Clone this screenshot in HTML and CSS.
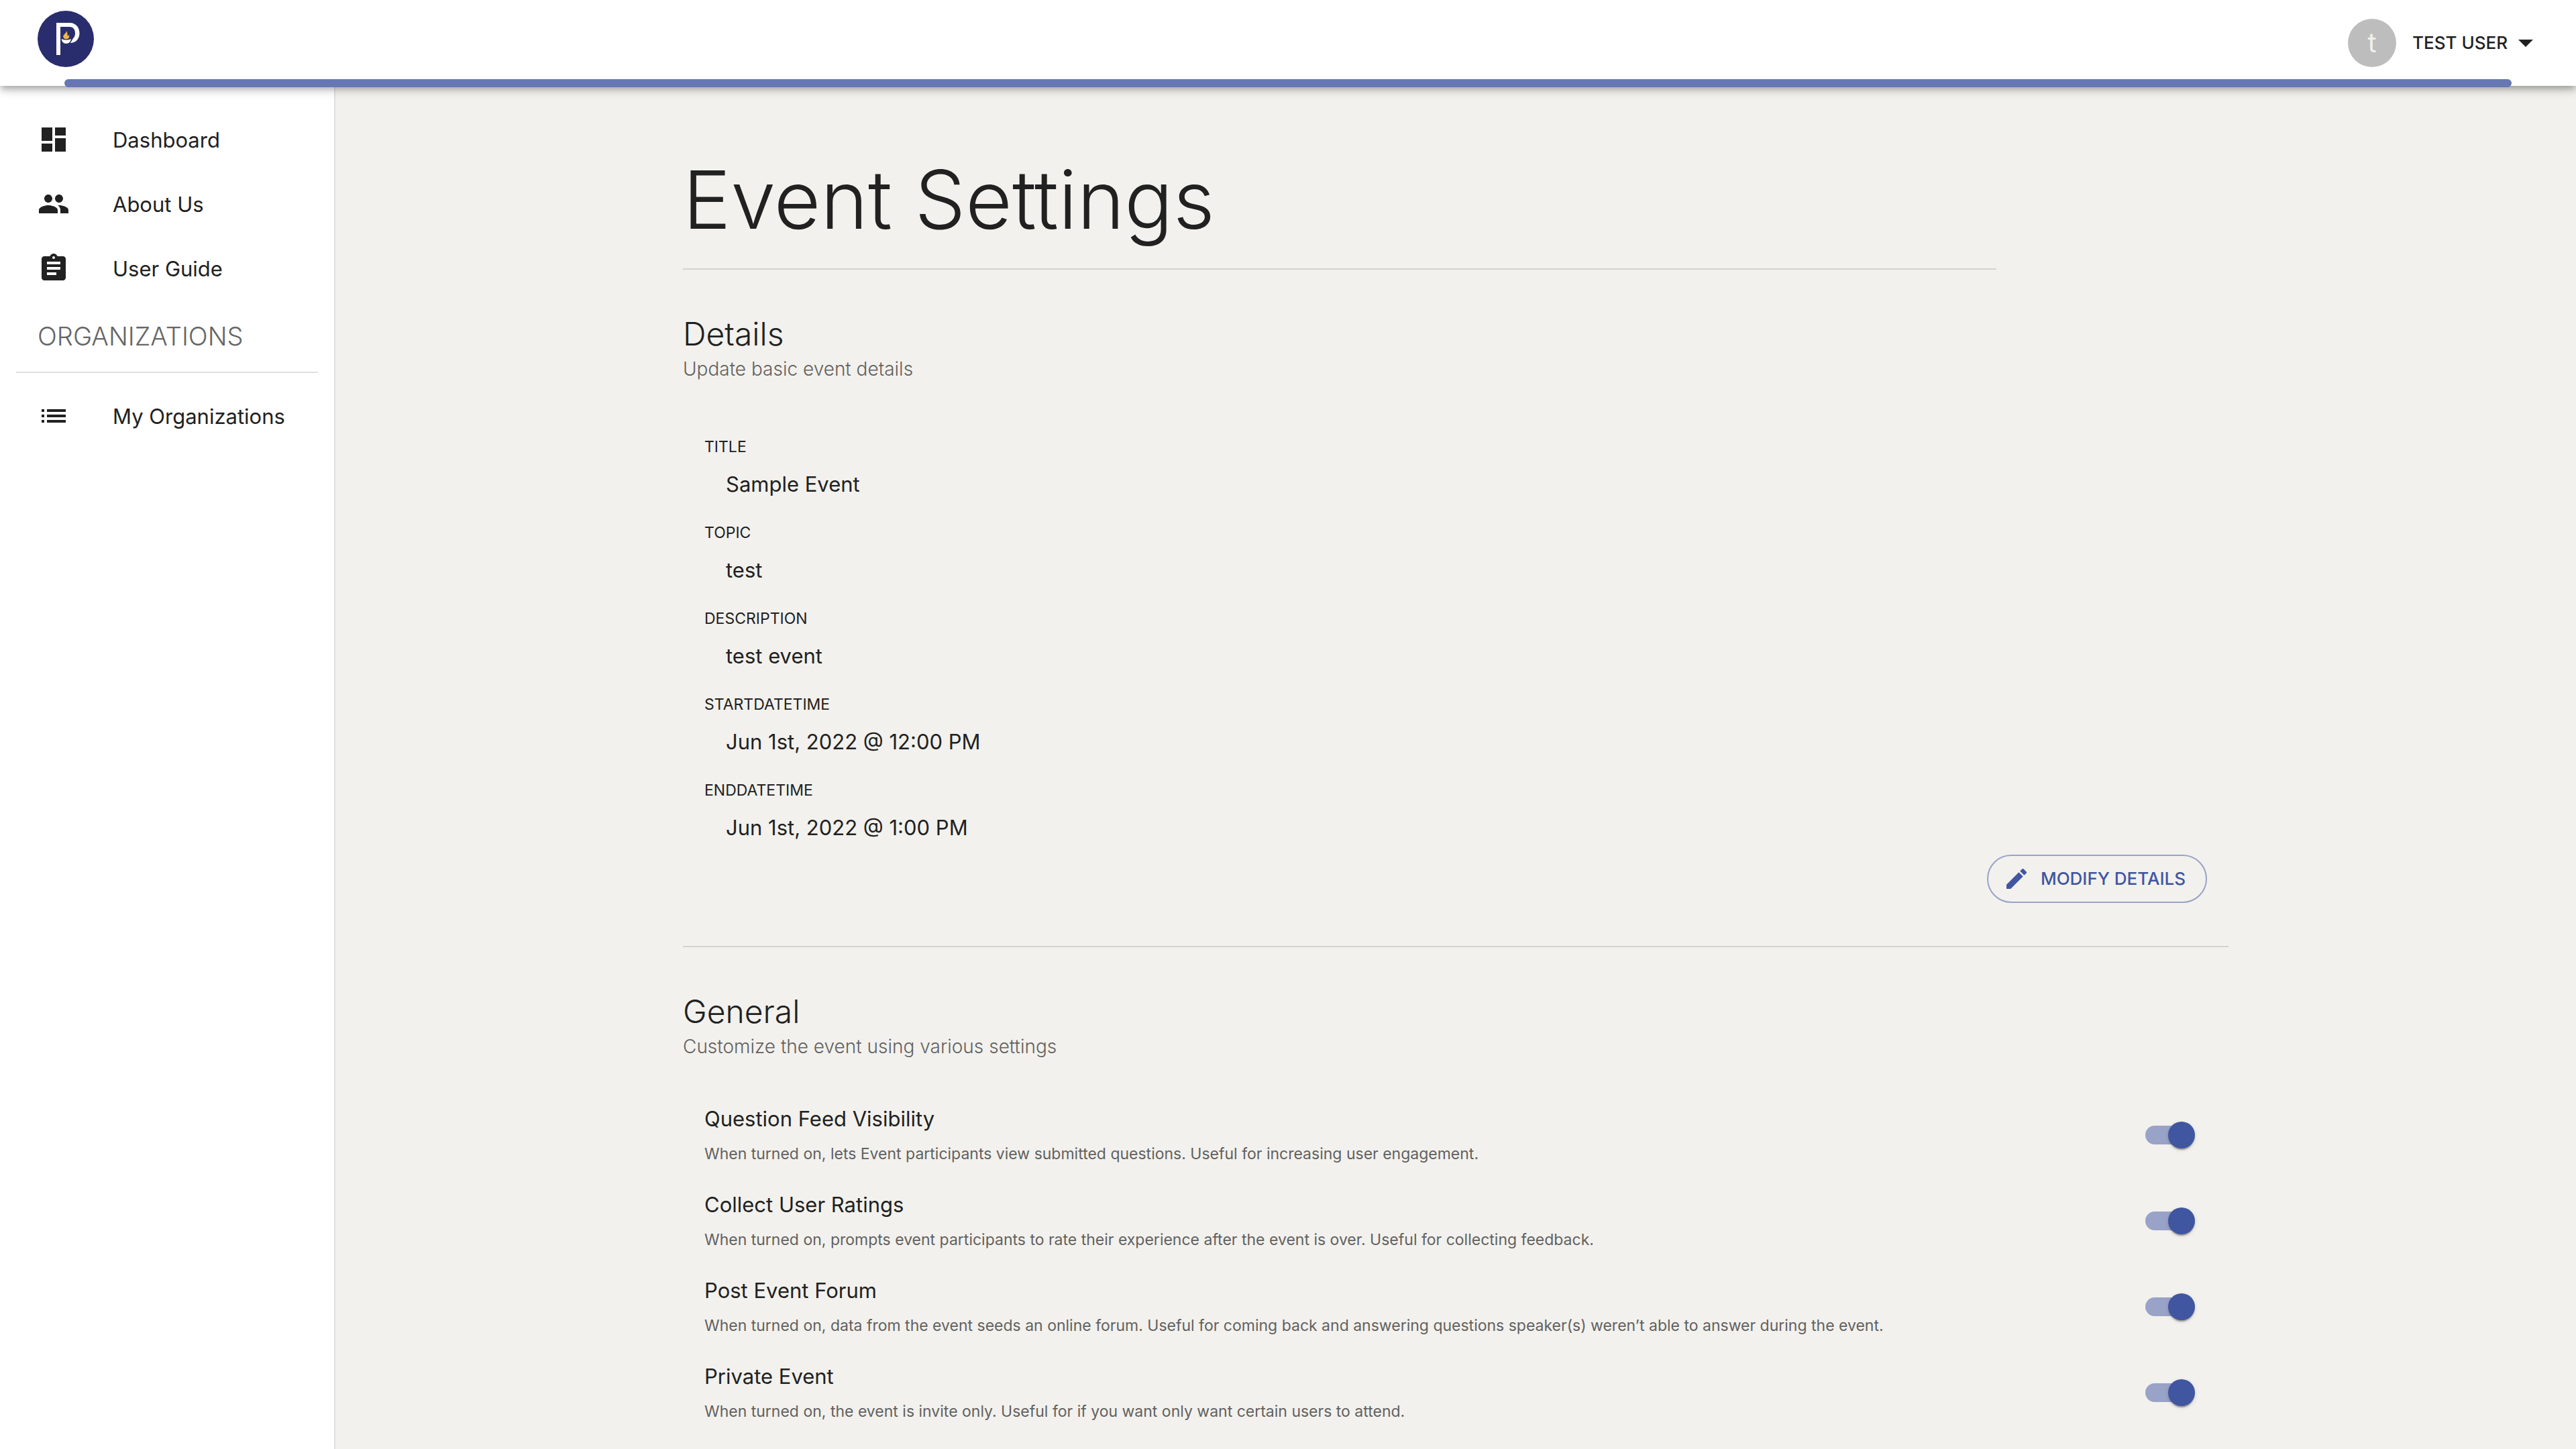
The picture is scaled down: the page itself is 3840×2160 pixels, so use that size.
FILE: index.html
```html
<!DOCTYPE html>
<html lang="en">
<head>
  <meta charset="utf-8">
  <meta name="viewport" content="width=device-width, initial-scale=1">
  <title>Event Settings</title>
  <link rel="stylesheet" href="styles.css">
</head>
<body>
  <header class="topbar">
    <a class="logo" href="#" aria-label="Home">
      <svg viewBox="0 0 84 84" width="84" height="84" aria-hidden="true">
        <circle cx="42" cy="42" r="42" fill="#292d6e"/>
        <path fill="#fff" d="M28 18h20c9 0 14.500 7 14.500 15.500C62.500 42 57 48 48.500 48c2.500-2 3-5.500 5.500-8 1.500-1.700 2-3.800 2-6.500 0-5.500-3-9.500-8-9.500H34v42h-6z"/>
        <path fill="#fff" d="M35.700 42c4.500 2 9.500 2 14 0-.2 4-3 7-7 7s-6.800-3-7-7z"/>
        <path fill="#ebb84a" d="M43 30c.5 3-4.800 5.200-4.800 8.500 0 2.200 2 3.800 4.500 3.800s4.600-1.600 4.600-4c0-1-.3-1.800-.9-2.500-.1 1-.6 1.600-1.400 1.700C44 35 45 32.500 43 30z"/>
      </svg>
    </a>
    <button class="user-menu" type="button">
      <span class="avatar">t</span>
      <span class="user-name">TEST USER</span>
      <svg class="caret" viewBox="0 0 22 11" width="22" height="11" aria-hidden="true"><path d="M0 0h22L11 11z"/></svg>
    </button>
    <div class="loading-bar"></div>
  </header>

  <div class="layout">
    <nav class="sidebar">
      <a class="nav-link" href="#">
        <svg class="nav-icon" viewBox="0 0 24 24" aria-hidden="true"><path d="M3 13h8V3H3v10zm0 8h8v-6H3v6zm10 0h8V11h-8v10zm0-18v6h8V3h-8z"/></svg>
        <span>Dashboard</span>
      </a>
      <a class="nav-link" href="#">
        <svg class="nav-icon" viewBox="0 0 24 24" aria-hidden="true"><path d="M16 11c1.660 0 2.990-1.340 2.990-3S17.660 5 16 5c-1.660 0-3 1.340-3 3s1.340 3 3 3zm-8 0c1.660 0 2.990-1.340 2.990-3S9.660 5 8 5C6.340 5 5 6.340 5 8s1.340 3 3 3zm0 2c-2.330 0-7 1.170-7 3.500V19h14v-2.500c0-2.330-4.670-3.500-7-3.500zm8 0c-.29 0-.62.02-.97.05 1.160.84 1.970 1.970 1.970 3.450V19h6v-2.500c0-2.330-4.670-3.500-7-3.500z"/></svg>
        <span>About Us</span>
      </a>
      <a class="nav-link" href="#">
        <svg class="nav-icon" viewBox="0 0 24 24" aria-hidden="true"><path d="M19 3h-4.180C14.400 1.840 13.300 1 12 1c-1.300 0-2.400.84-2.820 2H5c-1.100 0-2 .9-2 2v14c0 1.100.9 2 2 2h14c1.100 0 2-.9 2-2V5c0-1.100-.9-2-2-2zm-7 0c.55 0 1 .45 1 1s-.45 1-1 1-1-.45-1-1 .45-1 1-1zm2 14H7v-2h7v2zm3-4H7v-2h10v2zm0-4H7V7h10v2z"/></svg>
        <span>User Guide</span>
      </a>
      <h2 class="nav-heading">ORGANIZATIONS</h2>
      <a class="nav-link" href="#">
        <svg class="nav-icon" viewBox="0 0 24 24" aria-hidden="true"><path d="M3 13h2v-2H3v2zm0 4h2v-2H3v2zm0-8h2V7H3v2zm4 4h14v-2H7v2zm0 4h14v-2H7v2zM7 7v2h14V7H7z"/></svg>
        <span>My Organizations</span>
      </a>
    </nav>

    <main class="main">
      <div class="content">
        <h1 class="page-title">Event Settings</h1>

        <section class="section section-details">
          <h2 class="section-title">Details</h2>
          <p class="section-subtitle">Update basic event details</p>
          <dl class="details">
            <div><dt>TITLE</dt><dd>Sample Event</dd></div>
            <div><dt>TOPIC</dt><dd>test</dd></div>
            <div><dt>DESCRIPTION</dt><dd>test event</dd></div>
            <div><dt>STARTDATETIME</dt><dd>Jun 1st, 2022 @ 12:00 PM</dd></div>
            <div><dt>ENDDATETIME</dt><dd>Jun 1st, 2022 @ 1:00 PM</dd></div>
          </dl>
          <button class="modify" type="button">
            <svg viewBox="0 0 24 24" width="40" height="40" aria-hidden="true"><path d="M3 17.250V21h3.750L17.810 9.940l-3.750-3.750L3 17.250zM20.710 7.040c.39-.39.39-1.020 0-1.410l-2.340-2.340c-.39-.39-1.020-.39-1.410 0l-1.830 1.830 3.750 3.750 1.830-1.830z"/></svg>
            MODIFY DETAILS
          </button>
        </section>

        <section class="section">
          <h2 class="section-title">General</h2>
          <p class="section-subtitle">Customize the event using various settings</p>
          <div class="settings">
            <div class="setting">
              <div>
                <label class="setting-name" for="feed">Question Feed Visibility</label>
                <p class="setting-help" id="feed-help">When turned on, lets Event participants view submitted questions. Useful for increasing user engagement.</p>
              </div>
              <input class="switch" type="checkbox" role="switch" id="feed" aria-describedby="feed-help" checked>
            </div>
            <div class="setting">
              <div>
                <label class="setting-name" for="ratings">Collect User Ratings</label>
                <p class="setting-help" id="ratings-help">When turned on, prompts event participants to rate their experience after the event is over. Useful for collecting feedback.</p>
              </div>
              <input class="switch" type="checkbox" role="switch" id="ratings" aria-describedby="ratings-help" checked>
            </div>
            <div class="setting">
              <div>
                <label class="setting-name" for="forum">Post Event Forum</label>
                <p class="setting-help" id="forum-help">When turned on, data from the event seeds an online forum. Useful for coming back and answering questions speaker(s) weren’t able to answer during the event.</p>
              </div>
              <input class="switch" type="checkbox" role="switch" id="forum" aria-describedby="forum-help" checked>
            </div>
            <div class="setting">
              <div>
                <label class="setting-name" for="private">Private Event</label>
                <p class="setting-help" id="private-help">When turned on, the event is invite only. Useful for if you want only want certain users to attend.</p>
              </div>
              <input class="switch" type="checkbox" role="switch" id="private" aria-describedby="private-help" checked>
            </div>
          </div>
        </section>
      </div>
    </main>
  </div>
</body>
</html>
```
FILE: styles.css
```css
:root {
  --ink: #212121;
  --muted: #626160;
  --primary: #4056a1;
  --primary-light: #6677b3;
  --primary-half: rgba(64, 86, 161, 0.5);
  --page: #f2f1ed;
  --line: rgba(0, 0, 0, 0.12);
}

* {
  box-sizing: border-box;
}

body {
  margin: 0;
  min-height: 100vh;
  display: flex;
  flex-direction: column;
  background: var(--page);
  color: var(--ink);
  font-family: Inter, "Liberation Sans", sans-serif;
  font-size: 31px;
}

h1, h2, p, dl, dd {
  margin: 0;
  font-weight: 400;
}

svg {
  display: block;
  flex: none;
  fill: currentColor;
}

.topbar {
  position: relative;
  z-index: 1;
  height: 128px;
  padding: 0 64px 0 56px;
  display: flex;
  align-items: center;
  justify-content: space-between;
  background: #fff;
  box-shadow: 0 4px 8px -2px rgba(0, 0, 0, 0.2), 0 8px 10px rgba(0, 0, 0, 0.14), 0 2px 20px rgba(0, 0, 0, 0.12);
}

.logo {
  margin-bottom: 12px;
}

.loading-bar {
  position: absolute;
  left: 2.5%;
  right: 2.5%;
  bottom: -2px;
  height: 12px;
  border-radius: 6px;
  background: var(--primary-light);
}

.user-menu {
  display: flex;
  align-items: center;
  padding: 0;
  border: 0;
  background: none;
  color: inherit;
  font: 500 26px/48px Inter, "Liberation Sans", sans-serif;
  cursor: pointer;
}

.avatar {
  width: 72px;
  height: 72px;
  margin-right: 24px;
  border-radius: 50%;
  background: #bdbdbd;
  color: var(--page);
  font-size: 40px;
  font-weight: 400;
  line-height: 72px;
  text-align: center;
}

.caret {
  margin-left: 16px;
}

.layout {
  flex: 1;
  display: flex;
}

.sidebar {
  flex: none;
  width: 500px;
  padding-top: 32px;
  border-right: 2px solid #e0e0e0;
  background: #fff;
}

.nav-link {
  display: flex;
  align-items: center;
  gap: 64px;
  height: 96px;
  padding: 0 56px;
  color: inherit;
  text-decoration: none;
  white-space: nowrap;
}

.nav-icon {
  width: 48px;
  height: 48px;
}

.nav-heading {
  margin: 0 24px 16px;
  padding-left: 32px;
  border-bottom: 2px solid #e0e0e0;
  color: #666;
  font-size: 38px;
  font-weight: 300;
  line-height: 106px;
}

.main {
  flex: 1;
  min-width: 0;
  padding-top: 98px;
}

.content {
  width: 60vw;
  margin: 0 auto;
}

.page-title {
  width: 85%;
  padding-bottom: 30px;
  border-bottom: 2px solid var(--line);
  font-size: 120px;
  font-weight: 300;
  line-height: 144px;
}

.section {
  padding-top: 64px;
}

.section-details {
  display: flex;
  flex-direction: column;
  padding-bottom: 64px;
  border-bottom: 2px solid var(--line);
}

.section-title {
  font-size: 48px;
  font-weight: 300;
  line-height: 64px;
}

.section-subtitle {
  color: var(--muted);
  font-size: 28px;
  font-weight: 300;
  line-height: 40px;
}

.details {
  display: grid;
  gap: 16px;
  padding: 72px 32px 8px;
}

.details dt {
  font-size: 23px;
  line-height: 48px;
}

.details dd {
  padding-left: 32px;
  line-height: 64px;
}

.modify {
  align-self: flex-end;
  display: flex;
  align-items: center;
  gap: 16px;
  height: 72px;
  margin-right: 32px;
  padding: 0 30px 0 22px;
  border: 2px solid var(--primary-half);
  border-radius: 36px;
  background: none;
  color: var(--primary);
  font: 500 26px/48px Inter, "Liberation Sans", sans-serif;
  cursor: pointer;
}

.settings {
  padding: 48px 50px 20px 32px;
}

.setting {
  display: flex;
  align-items: center;
  justify-content: space-between;
  gap: 32px;
  min-height: 128px;
}

.setting-name {
  display: block;
  line-height: 56px;
}

.setting-help {
  color: var(--muted);
  font-size: 23px;
  line-height: 48px;
}

.switch {
  appearance: none;
  flex: none;
  display: flex;
  align-items: center;
  width: 74px;
  height: 40px;
  margin: 0;
  cursor: pointer;
}

.switch::before {
  content: "";
  flex: none;
  width: 68px;
  height: 28px;
  border-radius: 14px;
  background: rgba(0, 0, 0, 0.38);
}

.switch::after {
  content: "";
  flex: none;
  width: 40px;
  height: 40px;
  margin-left: -68px;
  border-radius: 50%;
  background: #fafafa;
  box-shadow: 0 4px 2px -2px rgba(0, 0, 0, 0.2), 0 2px 2px rgba(0, 0, 0, 0.14), 0 2px 6px rgba(0, 0, 0, 0.12);
}

.switch:checked::before {
  background: var(--primary-half);
}

.switch:checked::after {
  margin-left: -34px;
  background: var(--primary);
}
```
